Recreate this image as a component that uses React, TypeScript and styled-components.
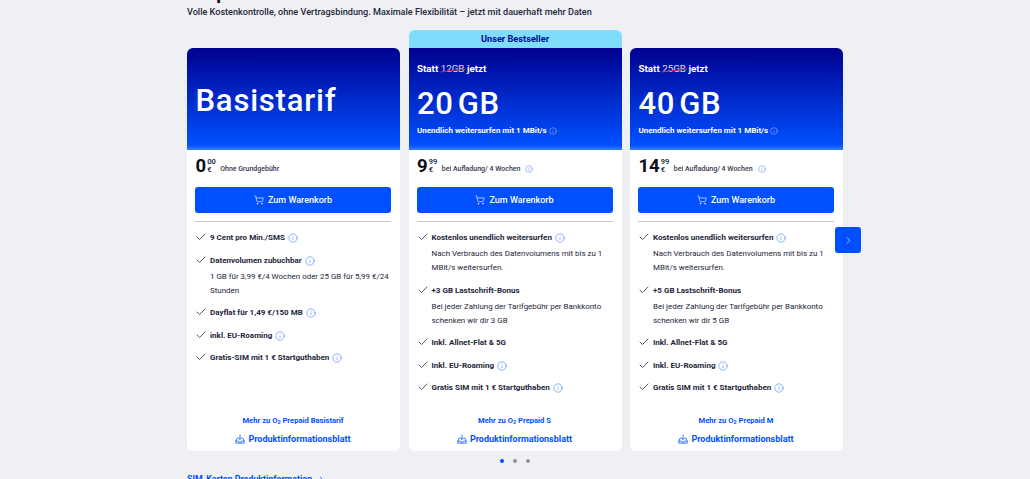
import React from "react";
import styled, { createGlobalStyle } from "styled-components";
import { Check, ChevronRight, ShoppingCart, Info } from "lucide-react";

const FONT = `Roboto, "Noto Sans", "Liberation Sans", sans-serif`;

const Global = createGlobalStyle`
  html, body { margin: 0; padding: 0; background: #eff0f3; overflow: hidden; }
  body { font-family: ${FONT}; color: #1f2333; }
`;
const Page = styled.div`
  width: 1030px; height: 479px; overflow: hidden; padding-left: 187px; box-sizing: border-box;
`;
const Title = styled.h2`
  margin: -19.5px 0 0; font-size: 19px; line-height: 24px; font-weight: 700; color: #0b0d18; white-space: nowrap;
`;
const Subtitle = styled.p`
  margin: -1.5px 0 0; font-size: 9.1px; line-height: 18px; font-weight: 500; color: #23263a; white-space: nowrap;
`;
const Slider = styled.div`
  position: relative; display: flex; gap: 8.5px; width: 656px; margin-top: 18px; align-items: stretch;
`;
const Card = styled.article`
  position: relative; width: 213px; height: 403px; margin-top: 9px; display: flex; flex-direction: column;
  background: #fff; border-radius: 6px;
`;
const Ribbon = styled.div`
  position: absolute; top: -18px; left: 0; right: 0; height: 18px; background: #80dcfb; border-radius: 6px 6px 0 0;
  color: #000a96; font-size: 9.2px; font-weight: 700; line-height: 18px; text-align: center;
`;
const Hero = styled.header<{ $flat?: boolean }>`
  height: 102px; box-sizing: border-box; padding: 14px 8.5px 0; color: #fff;
  border-radius: ${p => (p.$flat ? "0" : "6px 6px 0 0")};
  background: linear-gradient(180deg, #00008f 0%, #0050ff 95%, #3a7cff 100%);
  display: flex; flex-direction: column;
`;
const BasicName = styled.div`
  font-size: 31px; font-weight: 500; line-height: 40px; margin-top: 19px; letter-spacing: 0.8px;
`;
const Instead = styled.div`
  font-size: 9.8px; font-weight: 700; line-height: 14px; white-space: nowrap;
`;
const Struck = styled.span`
  position: relative; font-weight: 400; opacity: 0.85;
  &::after {
    content: ""; position: absolute; left: -1px; right: -1px; top: 7px; height: 1px; background: #e0303a; transform: rotate(-7deg);
  }
`;
const Amount = styled.div`
  font-size: 31px; font-weight: 500; line-height: 40px; margin-top: 8px; word-spacing: -4px; letter-spacing: 0.6px;
`;
const Note = styled.div`
  display: flex; align-items: center; gap: 2px; font-size: 8px; font-weight: 700; line-height: 12px; margin-top: 1px; white-space: nowrap;
`;
const Body = styled.div`
  flex: 1; display: flex; flex-direction: column; padding: 0 9px 0 8px;
`;
const PriceRow = styled.div`
  display: flex; align-items: center; height: 37px; box-sizing: border-box;
`;
const Price = styled.span`
  font-size: 18.5px; font-weight: 700; line-height: 24px; color: #0b0d18; margin: 0 0 5px 0.5px;
`;
const Fraction = styled.span`
  display: flex; flex-direction: column; font-size: 7.5px; line-height: 8px; font-weight: 600; margin: 0 0 5px 1px; color: #23263a;
`;
const PriceNote = styled.span`
  display: flex; align-items: center; gap: 5px; font-size: 7px; font-weight: 500; margin: 1px 0 0 4.500px; color: #33364a; white-space: nowrap;
`;
const CartButton = styled.button`
  display: flex; align-items: center; justify-content: center; gap: 4px; height: 25.5px; padding: 0; border: 0;
  border-radius: 3px; background: #0050ff; color: #fff; font: 500 9px ${FONT};
`;
const Rule = styled.hr`
  margin: 8.5px 0 0; border: 0; border-top: 1px solid #c6c7d3;
`;
const Features = styled.ul`
  list-style: none; margin: 9px 0 0; padding: 0; display: flex; flex-direction: column; gap: 8.5px;
`;
const Feature = styled.li`
  display: grid; grid-template-columns: 15px 1fr; font-size: 8px; line-height: 14px; color: #23263a;
`;
const Head = styled.div`
  display: flex; align-items: center; gap: 3px; font-weight: 700; white-space: nowrap;
`;
const Detail = styled.div`
  grid-column: 2; font-size: 7.95px; font-weight: 400; margin-top: 2px;
`;
const Links = styled.footer`
  margin-top: auto; padding-bottom: 5px; display: flex; flex-direction: column; align-items: center; color: #0050ff;
`;
const More = styled.a`
  font-size: 7.6px; line-height: 14px; font-weight: 700;
`;
const Sheet = styled.a`
  display: flex; align-items: center; gap: 3px; font-size: 9px; line-height: 14px; margin-top: 4px; font-weight: 700;
`;
const Arrow = styled.button`
  position: absolute; left: 648px; top: 188px; width: 26px; height: 26px; padding: 0; border: 0; border-radius: 3px;
  background: #0050ff; color: #dfe8ff; display: flex; align-items: center; justify-content: center;
`;
const Dots = styled.div`
  display: flex; justify-content: center; gap: 9px; width: 656px; margin-top: 8px;
`;
const Dot = styled.span<{ $on?: boolean }>`
  width: 4px; height: 4px; border-radius: 50%; background: ${p => (p.$on ? "#0050ff" : "#8f919c")};
`;
const SimLink = styled.a`
  display: flex; align-items: center; gap: 5px; margin-top: 9px; font-size: 8.8px; line-height: 14px; font-weight: 700; color: #0050ff;
`;
const Sub2 = styled.sub`
  font-size: 5.5px; line-height: 0; vertical-align: -1px;
`;

const I = ({ c = "#2f70ff", s = 10 }: { c?: string; s?: number }) => <Info size={s} color={c} strokeWidth={1.3} />;

const TrayIcon = () => (
  <svg width="10" height="10" viewBox="0 0 24 24" fill="none" stroke="currentColor" strokeWidth="1.8" strokeLinejoin="round" strokeLinecap="round">
    <path d="M12 2v11M8.5 9.500 12 13l3.500-3.500" />
    <path d="M7 10H5l-3 7v5h20v-5l-3-7h-2" />
    <path d="M2 17h6l1.500 2.500h5L16 17h6" />
  </svg>
);

type F = { t: string; info?: boolean; d?: string };
type P = {
  name?: string; was?: string; gb?: string; best?: boolean; price: string; frac: string; note: string; noteInfo?: boolean; features: F[]; more: string;
};
const plans: P[] = [
  {
    name: "Basistarif", price: "0", frac: "00", note: "Ohne Grundgebühr", more: "Basistarif",
    features: [
      { t: "9 Cent pro Min./SMS", info: true },
      { t: "Datenvolumen zubuchbar", info: true, d: "1 GB für 3,99 €/4 Wochen oder 25 GB für 5,99 €/24 Stunden" },
      { t: "Dayflat für 1,49 €/150 MB", info: true },
      { t: "inkl. EU-Roaming", info: true },
      { t: "Gratis-SIM mit 1 € Startguthaben", info: true },
    ],
  },
  {
    was: "12GB", gb: "20 GB", best: true, price: "9", frac: "99", note: "bei Aufladung/ 4 Wochen", noteInfo: true, more: "S",
    features: [
      { t: "Kostenlos unendlich weitersurfen", info: true, d: "Nach Verbrauch des Datenvolumens mit bis zu 1 MBit/s weitersurfen." },
      { t: "+3 GB Lastschrift-Bonus", d: "Bei jeder Zahlung der Tarifgebühr per Bankkonto schenken wir dir 3 GB" },
      { t: "Inkl. Allnet-Flat & 5G" },
      { t: "Inkl. EU-Roaming", info: true },
      { t: "Gratis SIM mit 1 € Startguthaben", info: true },
    ],
  },
  {
    was: "25GB", gb: "40 GB", price: "14", frac: "99", note: "bei Aufladung/ 4 Wochen", noteInfo: true, more: "M",
    features: [
      { t: "Kostenlos unendlich weitersurfen", info: true, d: "Nach Verbrauch des Datenvolumens mit bis zu 1 MBit/s weitersurfen." },
      { t: "+5 GB Lastschrift-Bonus", d: "Bei jeder Zahlung der Tarifgebühr per Bankkonto schenken wir dir 5 GB" },
      { t: "Inkl. Allnet-Flat & 5G" },
      { t: "Inkl. EU-Roaming", info: true },
      { t: "Gratis SIM mit 1 € Startguthaben", info: true },
    ],
  },
];

export default function App() {
  return (
    <Page>
      <Global />
      <Title>Prepaid Tarife</Title>
      <Subtitle>Volle Kostenkontrolle, ohne Vertragsbindung. Maximale Flexibilität – jetzt mit dauerhaft mehr Daten</Subtitle>
      <Slider>
        {plans.map(p => (
          <Card key={p.more}>
            {p.best && <Ribbon>Unser Bestseller</Ribbon>}
            <Hero $flat={p.best}>
              {p.name ? (
                <BasicName>{p.name}</BasicName>
              ) : (
                <>
                  <Instead>Statt <Struck>{p.was}</Struck> jetzt</Instead>
                  <Amount>{p.gb}</Amount>
                  <Note>Unendlich weitersurfen mit 1 MBit/s <I c="#c9d8ff" s={8} /></Note>
                </>
              )}
            </Hero>
            <Body>
              <PriceRow>
                <Price>{p.price}</Price>
                <Fraction><span>{p.frac}</span><span>€</span></Fraction>
                <PriceNote>{p.note}{p.noteInfo && <I s={8} />}</PriceNote>
              </PriceRow>
              <CartButton><ShoppingCart size={10} strokeWidth={1.5} /> Zum Warenkorb</CartButton>
              <Rule />
              <Features>
                {p.features.map(f => (
                  <Feature key={f.t}>
                    <Check size={12} strokeWidth={1.5} />
                    <Head>{f.t}{f.info && <I />}</Head>
                    {f.d && <Detail>{f.d}</Detail>}
                  </Feature>
                ))}
              </Features>
              <Links>
                <More>Mehr zu O<Sub2>2</Sub2> Prepaid {p.more}</More>
                <Sheet><TrayIcon /> Produktinformationsblatt</Sheet>
              </Links>
            </Body>
          </Card>
        ))}
        <Arrow aria-label="Weiter"><ChevronRight size={11} strokeWidth={1.5} /></Arrow>
      </Slider>
      <Dots><Dot $on /><Dot /><Dot /></Dots>
      <SimLink>SIM-Karten Produktinformation <ChevronRight size={9} /></SimLink>
    </Page>
  );
}
